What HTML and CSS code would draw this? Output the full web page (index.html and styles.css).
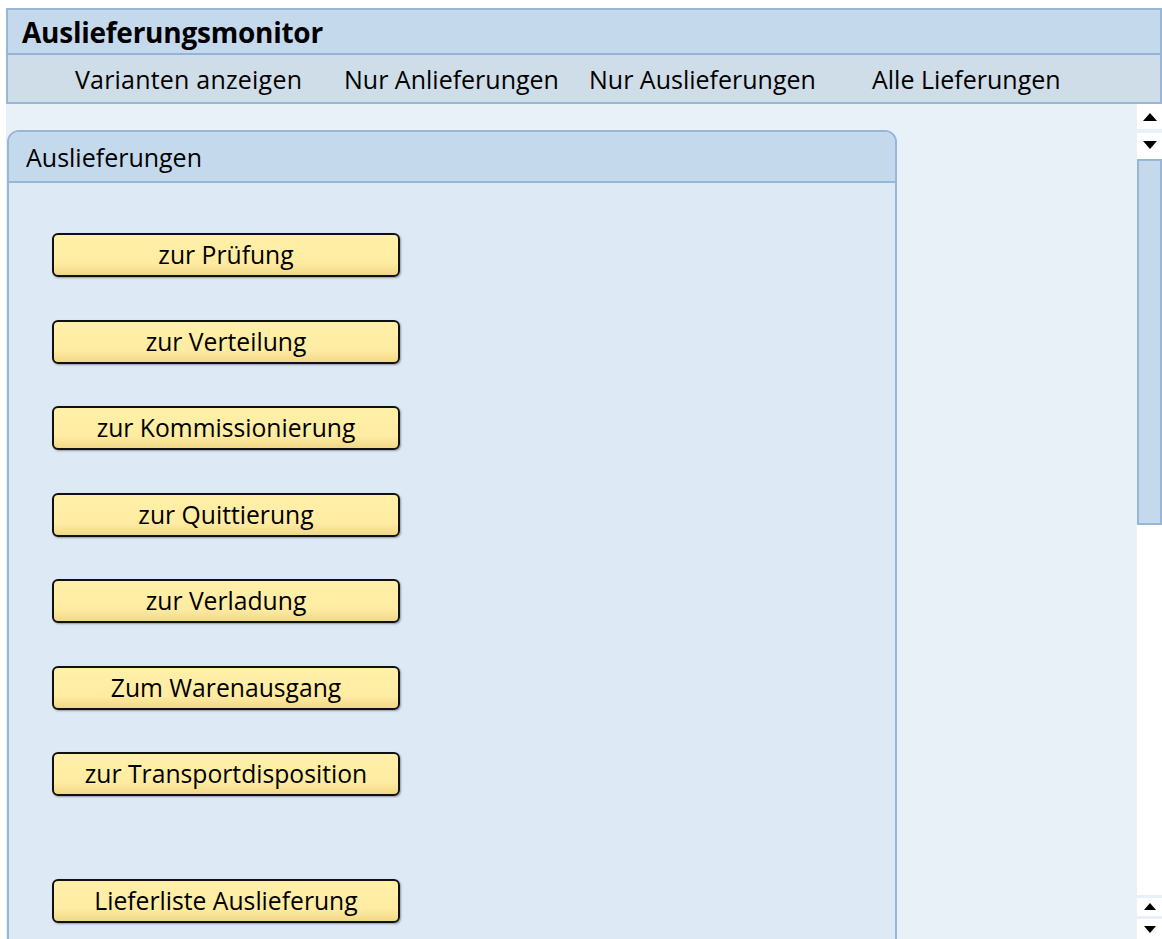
FILE: index.html
```html
<!DOCTYPE html>
<html lang="de">
<head>
<meta charset="utf-8">
<title>Auslieferungsmonitor</title>
<link rel="stylesheet" href="styles.css">
</head>
<body>
<div class="app">
  <div class="titlebar">Auslieferungsmonitor</div>
  <div class="menubar">
    <span class="menu-item m1">Varianten anzeigen</span>
    <span class="menu-item m2">Nur Anlieferungen</span>
    <span class="menu-item m3">Nur Auslieferungen</span>
    <span class="menu-item m4">Alle Lieferungen</span>
  </div>
  <div class="content">
    <div class="main">
      <div class="panel">
        <div class="panel-header">Auslieferungen</div>
        <div class="panel-body">
          <button class="btn">zur Prüfung</button>
          <button class="btn">zur Verteilung</button>
          <button class="btn">zur Kommissionierung</button>
          <button class="btn">zur Quittierung</button>
          <button class="btn">zur Verladung</button>
          <button class="btn">Zum Warenausgang</button>
          <button class="btn">zur Transportdisposition</button>
          <button class="btn btn-last">Lieferliste Auslieferung</button>
        </div>
      </div>
    </div>
    <div class="scrollbar">
      <div class="sb-btn sb-top"><span class="tri-up big"></span></div>
      <div class="sb-btn sb-second"><span class="tri-down big"></span></div>
      <div class="sb-thumb"></div>
      <div class="sb-track"></div>
      <div class="sb-btn sb-small"><span class="tri-up"></span></div>
      <div class="sb-btn sb-small sb-last"><span class="tri-down"></span></div>
    </div>
  </div>
</div>
</body>
</html>
```
FILE: styles.css
```css
html, body {
  margin: 0;
  padding: 0;
  background: #ffffff;
  height: 100%;
  overflow: hidden;
}
body {
  font-family: "Open Sans", Lato, "Liberation Sans", sans-serif;
  color: #000;
}
.app {
  margin: 8px 0 0 6px;
  width: 1156px;
  height: 931px;
  display: flex;
  flex-direction: column;
}
.titlebar {
  height: 47px;
  box-sizing: border-box;
  background: #c5d9ed;
  border: 2px solid #98b6d6;
  border-bottom: 2px solid #92b4d6;
  font-weight: 700;
  font-size: 28px;
  line-height: 45px;
  padding-left: 14px;
  letter-spacing: -0.25px;
}
.menubar {
  height: 49px;
  box-sizing: border-box;
  background: #cfdde9;
  border: 2px solid #98b6d6;
  border-top: none;
  display: flex;
  align-items: center;
  font-size: 25px;
  padding-left: 67px;
}
.menu-item { white-space: nowrap; flex: none; }
.m1 { width: 269px; letter-spacing: 0.2px; }
.m2 { width: 245px; }
.m3 { width: 283px; }
.content {
  flex: 1;
  display: flex;
  min-height: 0;
}
.main {
  flex: 1;
  background: #e8f0f8;
  padding: 26px 0 0 1px;
  overflow: hidden;
}
.panel {
  width: 890px;
  height: 900px;
  box-sizing: border-box;
  border: 2px solid #98b6d6;
  border-radius: 12px 12px 0 0;
  background: #dde9f4;
}
.panel-header {
  height: 51px;
  box-sizing: border-box;
  background: #c5d9ed;
  border-bottom: 2px solid #98b6d6;
  border-radius: 10px 10px 0 0;
  font-size: 25px;
  line-height: 51px;
  padding-left: 17px;
}
.panel-body {
  display: flex;
  flex-direction: column;
  align-items: flex-start;
  padding: 50px 0 0 43px;
  gap: 42.5px;
}
.btn {
  width: 348px;
  height: 44px;
  box-sizing: border-box;
  border: 2px solid #111;
  border-radius: 6px;
  background: linear-gradient(to bottom, #fff0a8 0%, #ffeca2 70%, #f0d888 100%);
  box-shadow: 1px 1px 2px rgba(0,0,0,0.35);
  font-family: inherit;
  font-size: 24.7px;
  color: #000;
  padding: 0;
  line-height: 40px;
  text-align: center;
  white-space: nowrap;
}
.btn-last { margin-top: 40px; }
.scrollbar {
  width: 25px;
  background: #ffffff;
  display: flex;
  flex-direction: column;
}
.sb-btn {
  display: flex;
  align-items: center;
  justify-content: center;
  background: #ffffff;
}
.sb-top { height: 24px; margin-top: 1px; }
.sb-second { height: 24px; margin-top: 4px; box-shadow: 0 -4px 0 #e8f0f8; }
.sb-thumb {
  margin-top: 2px;
  height: 366px;
  box-sizing: border-box;
  background: #c5d9ed;
  border: 2px solid #98b6d6;
}
.sb-track { flex: 1; background: #ffffff; }
.sb-small { height: 17px; box-shadow: 0 -3px 0 #e8f0f8; margin-top: 3px; }
.sb-last { height: 20px; margin-top: 4px; }
.tri-up {
  width: 0; height: 0;
  border-left: 6px solid transparent;
  border-right: 6px solid transparent;
  border-bottom: 7px solid #000;
}
.tri-down {
  width: 0; height: 0;
  border-left: 6px solid transparent;
  border-right: 6px solid transparent;
  border-top: 7px solid #000;
}
.tri-up.big { border-left-width: 7px; border-right-width: 7px; border-bottom-width: 8px; }
.tri-down.big { border-left-width: 7px; border-right-width: 7px; border-top-width: 8px; }
```
